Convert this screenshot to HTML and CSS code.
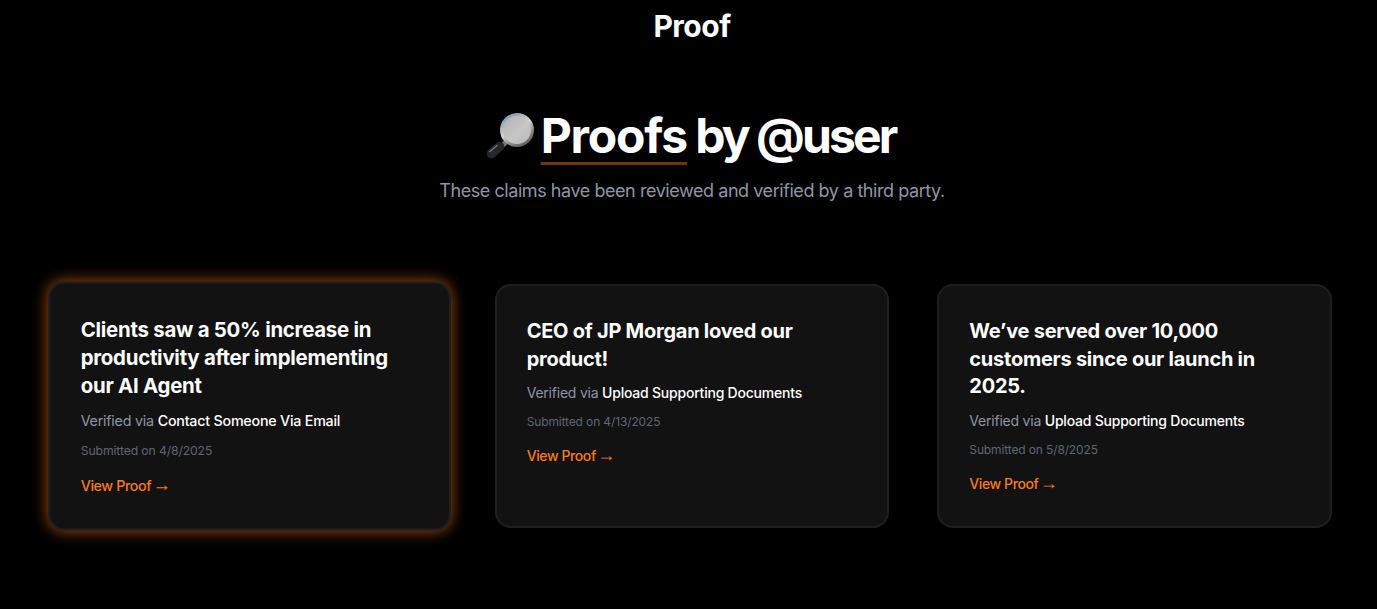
FILE: index.html
```html
<!DOCTYPE html>
<html lang="en">

<head>
  <meta charset="UTF-8" />
  <title>Proof</title>
  <link rel="stylesheet" href="styles.css">
</head>

<body>
  <div class="w">
    <h2 class="page-title">Proof</h2>

    <div class="intro">
      <h1 class="intro-title">
        <svg class="lens" viewBox="0 0 52 47" aria-hidden="true">
          <defs>
            <linearGradient id="rim" x1="0.2" y1="0" x2="0.8" y2="1">
              <stop offset="0" stop-color="#7f97ad" />
              <stop offset="0.45" stop-color="#d5d5d5" />
              <stop offset="0.75" stop-color="#8a8683" />
              <stop offset="1" stop-color="#5d5854" />
            </linearGradient>
            <linearGradient id="glass" x1="0" y1="0" x2="1" y2="1">
              <stop offset="0" stop-color="#b0b0b0" />
              <stop offset="0.55" stop-color="#c6c6c6" />
              <stop offset="1" stop-color="#b8b8b8" />
            </linearGradient>
          </defs>
          <path d="M21 30 L15 36" stroke="#77736f" stroke-width="5" />
          <path d="M14.500 34.500 L6.500 41.500" stroke="#24282b" stroke-width="9.500" stroke-linecap="round" />
          <path d="M12 33.500 L5 39.500" stroke="#6d7478" stroke-width="1.500" stroke-linecap="round" />
          <circle cx="32" cy="18" r="15.500" fill="url(#glass)" stroke="url(#rim)" stroke-width="3" />
        </svg><span class="mark">Proofs</span> <span class="by">by @user</span>
      </h1>
      <p class="intro-sub">These claims have been reviewed and verified by a third party.</p>
    </div>

    <div class="cards">
      <div class="card card-active">
        <h3 class="card-title">Clients saw a 50% increase in productivity after implementing our AI Agent</h3>
        <p class="card-via">Verified via <span>Contact Someone Via Email</span></p>
        <p class="card-date">Submitted on 4/8/2025</p>
        <a class="card-link" href="#">View Proof <span class="arrow">→</span></a>
      </div>
      <div class="card">
        <h3 class="card-title">CEO of JP Morgan loved our product!</h3>
        <p class="card-via">Verified via <span>Upload Supporting Documents</span></p>
        <p class="card-date">Submitted on 4/13/2025</p>
        <a class="card-link" href="#">View Proof <span class="arrow">→</span></a>
      </div>
      <div class="card">
        <h3 class="card-title">We’ve served over 10,000 customers since our launch in 2025.</h3>
        <p class="card-via">Verified via <span>Upload Supporting Documents</span></p>
        <p class="card-date">Submitted on 5/8/2025</p>
        <a class="card-link" href="#">View Proof <span class="arrow">→</span></a>
      </div>
    </div>
  </div>
</body>

</html>
```

FILE: styles.css
```css
* {
  margin: 0;
  padding: 0;
  box-sizing: border-box;
}

html,
body {
  height: 100%;
  overflow: hidden;
}

body {
  background: #000;
  color: #fff;
  font-family: "Inter", "Liberation Sans", sans-serif;
}

.w {
  width: 1280px;
  margin-left: 52px;
}

.page-title {
  padding-top: 8px;
  text-align: center;
  font-size: 30px;
  line-height: 36px;
  font-weight: 700;
  letter-spacing: -0.5px;
}

.intro {
  margin-top: 64px;
  text-align: center;
}

.intro-title {
  padding-right: 4px;
  font-size: 48px;
  line-height: 56px;
  font-weight: 700;
  letter-spacing: -1.2px;
}

.lens {
  width: 52px;
  height: 47px;
  margin-right: 4px;
  vertical-align: -6px;
}

.mark {
  text-decoration: underline 3px #6b3512;
  text-decoration-skip-ink: none;
  text-underline-offset: 9px;
}

.by {
  margin-left: -2px;
  letter-spacing: -2.9px;
}

.intro-sub {
  margin-top: 13px;
  font-size: 18px;
  line-height: 28px;
  letter-spacing: -0.44px;
  color: #8f96a3;
}

.cards {
  display: grid;
  grid-template-columns: repeat(3, 1fr);
  gap: 48px;
  margin-top: 79px;
}

.card {
  padding: 32px 30px 32px;
  background: #121212;
  border: 2px solid #1f1f1f;
  border-radius: 16px;
}

.card-active {
  transform: scale(1.02);
  box-shadow: 0 0 15px rgba(249, 115, 22, 0.65);
}

.card-title {
  font-size: 20px;
  line-height: 27.5px;
  font-weight: 700;
  letter-spacing: -0.25px;
}

.card-via {
  margin-top: 9px;
  font-size: 14px;
  line-height: 22px;
  letter-spacing: -0.22px;
  color: #8f96a3;
}

.card-via span {
  color: #fff;
  font-weight: 500;
}

.card-date {
  margin-top: 10px;
  font-size: 12px;
  line-height: 16px;
  letter-spacing: -0.13px;
  color: #5f6673;
}

.card-link {
  display: block;
  margin-top: 16px;
  font-size: 14px;
  line-height: 20px;
  font-weight: 500;
  letter-spacing: -0.4px;
  color: #f97a1f;
  text-decoration: none;
}

.arrow {
  margin-left: -2px;
  font-family: "Liberation Sans", sans-serif;
  font-size: 18px;
  line-height: 1;
}
```
